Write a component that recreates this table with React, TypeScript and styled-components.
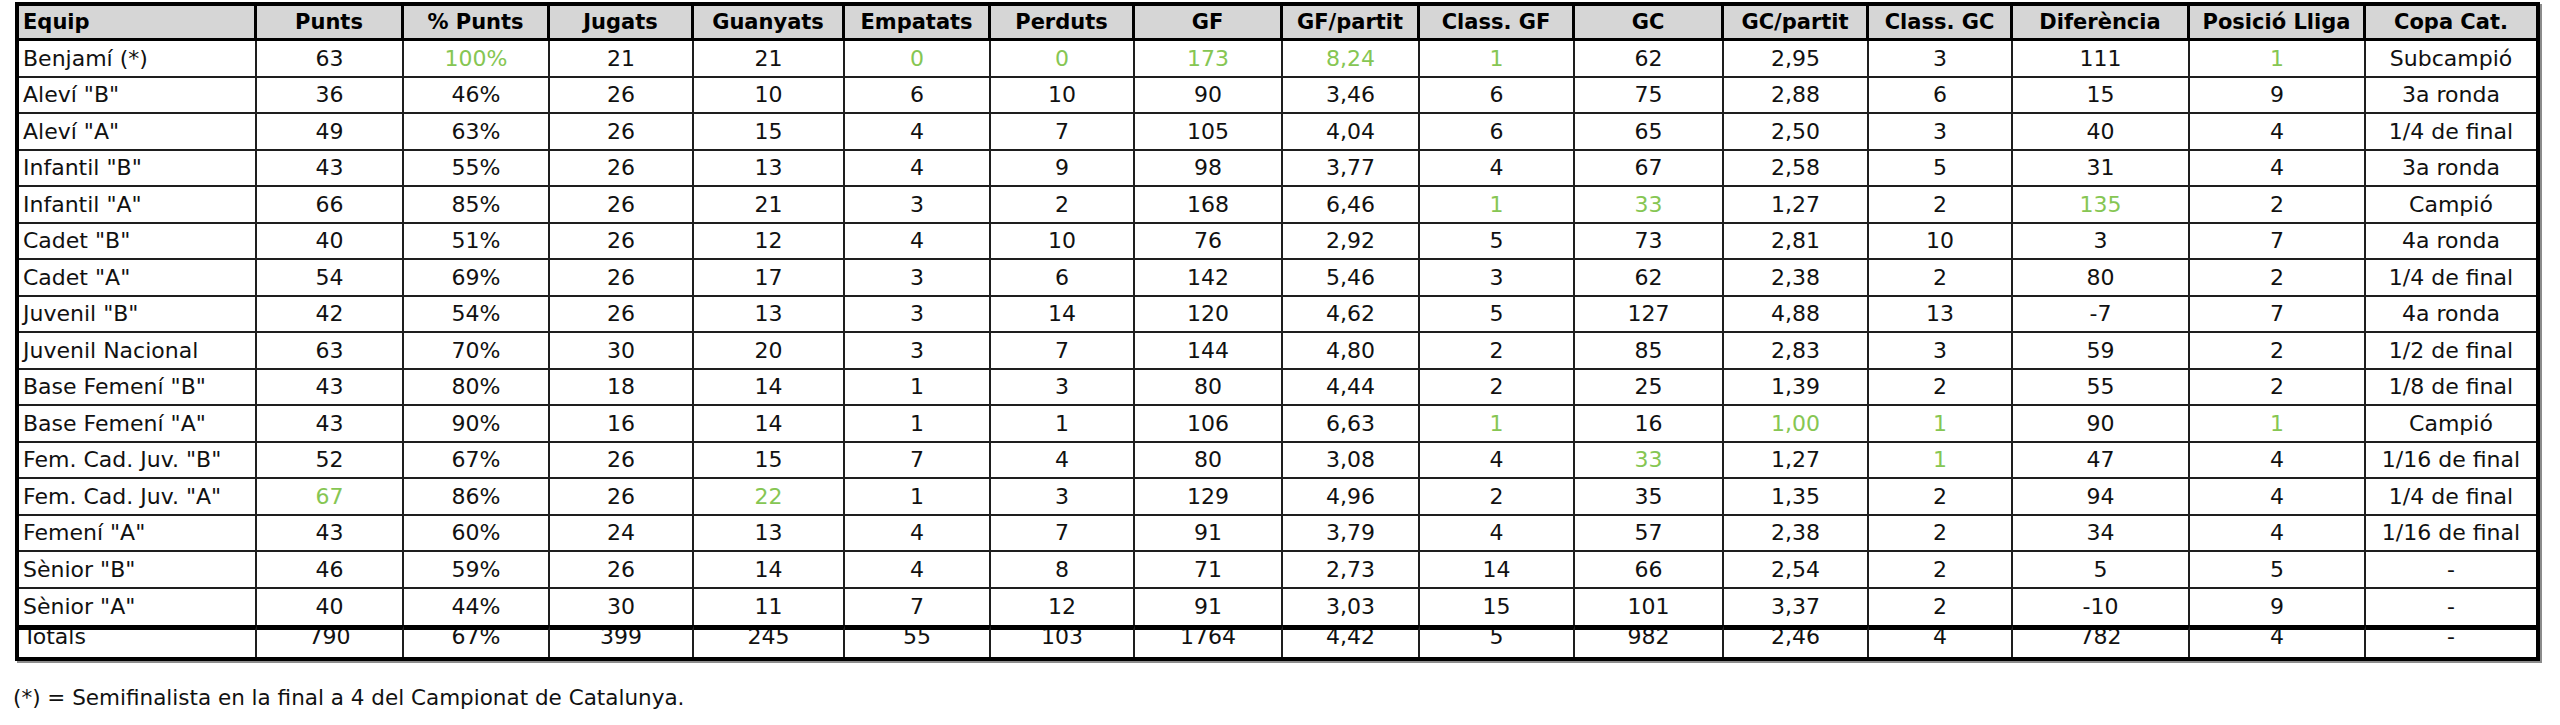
import styled, { createGlobalStyle } from "styled-components";

const GlobalStyle = createGlobalStyle`
  body {
    margin: 0;
    background: #fff;
    font-family: "DejaVu Sans", "Liberation Sans", sans-serif;
    color: #000;
  }
`;

const Page = styled.div`
  padding: 2px 0 0 15px;
`;

const StatsTable = styled.table`
  border: 4px solid #000;
  border-spacing: 0;
  table-layout: fixed;
  width: 2525px;
  box-shadow: 2px 2px 0 #8c8c8c;
  font-size: 22px;
`;

const HeadRow = styled.tr`
  height: 35px;
`;

const HeadCell = styled.th<{ $left?: boolean; $last?: boolean }>`
  background: #d6d6d6;
  font-size: 21px;
  font-weight: bold;
  padding: 0 4px;
  text-align: ${(p) => (p.$left ? "left" : "center")};
  border-right: ${(p) => (p.$last ? "none" : "3px solid #000")};
  border-bottom: 3px solid #000;
  white-space: nowrap;
  overflow: hidden;
`;

const DataRow = styled.tr`
  height: 36.5px;
`;

const Cell = styled.td<{ $left?: boolean; $last?: boolean; $green?: boolean; $noBottom?: boolean }>`
  padding: 0 4px;
  text-align: ${(p) => (p.$left ? "left" : "center")};
  color: ${(p) => (p.$green ? "#86c653" : "#111")};
  border-right: ${(p) => (p.$last ? "none" : "2px solid #1e1e1e")};
  border-bottom: ${(p) => (p.$noBottom ? "none" : "2px solid #1e1e1e")};
  white-space: nowrap;
  overflow: hidden;
`;

const TotalRow = styled.tr`
  height: 32px;
`;

const TotalCell = styled.td<{ $left?: boolean; $last?: boolean }>`
  padding: 0 4px;
  vertical-align: top;
  text-align: ${(p) => (p.$left ? "left" : "center")};
  color: #111;
  border-top: 5px solid #000;
  border-right: ${(p) => (p.$last ? "none" : "2px solid #1e1e1e")};
  white-space: nowrap;
  overflow: hidden;
`;

// la fila de totals queda retallada per la vora gruixuda, com a l'original
const TotalClip = styled.div`
  height: 27px;
  overflow: hidden;
`;

const TotalText = styled.div`
  line-height: 26px;
  margin-top: -6px;
`;

const Footnote = styled.p`
  margin: 25px 0 0 -2px;
  font-size: 21.5px;
  line-height: 24px;
  color: #111;
`;

const columns: { label: string; width: number }[] = [
  { label: "Equip", width: 238 },
  { label: "Punts", width: 147 },
  { label: "% Punts", width: 146 },
  { label: "Jugats", width: 144 },
  { label: "Guanyats", width: 151 },
  { label: "Empatats", width: 146 },
  { label: "Perduts", width: 144 },
  { label: "GF", width: 148 },
  { label: "GF/partit", width: 137 },
  { label: "Class. GF", width: 155 },
  { label: "GC", width: 149 },
  { label: "GC/partit", width: 145 },
  { label: "Class. GC", width: 144 },
  { label: "Diferència", width: 177 },
  { label: "Posició Lliga", width: 176 },
  { label: "Copa Cat.", width: 170 },
];

// green = indexs de columna destacats
type Team = { cells: string[]; green?: number[] };

const teams: Team[] = [
  { cells: ["Benjamí (*)", "63", "100%", "21", "21", "0", "0", "173", "8,24", "1", "62", "2,95", "3", "111", "1", "Subcampió"], green: [2, 5, 6, 7, 8, 9, 14] },
  { cells: ['Aleví "B"', "36", "46%", "26", "10", "6", "10", "90", "3,46", "6", "75", "2,88", "6", "15", "9", "3a ronda"] },
  { cells: ['Aleví "A"', "49", "63%", "26", "15", "4", "7", "105", "4,04", "6", "65", "2,50", "3", "40", "4", "1/4 de final"] },
  { cells: ['Infantil "B"', "43", "55%", "26", "13", "4", "9", "98", "3,77", "4", "67", "2,58", "5", "31", "4", "3a ronda"] },
  { cells: ['Infantil "A"', "66", "85%", "26", "21", "3", "2", "168", "6,46", "1", "33", "1,27", "2", "135", "2", "Campió"], green: [9, 10, 13] },
  { cells: ['Cadet "B"', "40", "51%", "26", "12", "4", "10", "76", "2,92", "5", "73", "2,81", "10", "3", "7", "4a ronda"] },
  { cells: ['Cadet "A"', "54", "69%", "26", "17", "3", "6", "142", "5,46", "3", "62", "2,38", "2", "80", "2", "1/4 de final"] },
  { cells: ['Juvenil "B"', "42", "54%", "26", "13", "3", "14", "120", "4,62", "5", "127", "4,88", "13", "-7", "7", "4a ronda"] },
  { cells: ["Juvenil Nacional", "63", "70%", "30", "20", "3", "7", "144", "4,80", "2", "85", "2,83", "3", "59", "2", "1/2 de final"] },
  { cells: ['Base Femení "B"', "43", "80%", "18", "14", "1", "3", "80", "4,44", "2", "25", "1,39", "2", "55", "2", "1/8 de final"] },
  { cells: ['Base Femení "A"', "43", "90%", "16", "14", "1", "1", "106", "6,63", "1", "16", "1,00", "1", "90", "1", "Campió"], green: [9, 11, 12, 14] },
  { cells: ['Fem. Cad. Juv. "B"', "52", "67%", "26", "15", "7", "4", "80", "3,08", "4", "33", "1,27", "1", "47", "4", "1/16 de final"], green: [10, 12] },
  { cells: ['Fem. Cad. Juv. "A"', "67", "86%", "26", "22", "1", "3", "129", "4,96", "2", "35", "1,35", "2", "94", "4", "1/4 de final"], green: [1, 4] },
  { cells: ['Femení "A"', "43", "60%", "24", "13", "4", "7", "91", "3,79", "4", "57", "2,38", "2", "34", "4", "1/16 de final"] },
  { cells: ['Sènior "B"', "46", "59%", "26", "14", "4", "8", "71", "2,73", "14", "66", "2,54", "2", "5", "5", "-"] },
  { cells: ['Sènior "A"', "40", "44%", "30", "11", "7", "12", "91", "3,03", "15", "101", "3,37", "2", "-10", "9", "-"] },
];

const totals = ["Totals", "790", "67%", "399", "245", "55", "103", "1764", "4,42", "5", "982", "2,46", "4", "782", "4", "-"];

export default function App() {
  const lastCol = columns.length - 1;
  return (
    <Page>
      <GlobalStyle />
      <StatsTable>
        <colgroup>
          {columns.map((c) => (
            <col key={c.label} style={{ width: c.width }} />
          ))}
        </colgroup>
        <thead>
          <HeadRow>
            {columns.map((c, i) => (
              <HeadCell key={c.label} $left={i === 0} $last={i === lastCol}>
                {c.label}
              </HeadCell>
            ))}
          </HeadRow>
        </thead>
        <tbody>
          {teams.map((t, r) => (
            <DataRow key={t.cells[0]}>
              {t.cells.map((v, i) => (
                <Cell
                  key={i}
                  $left={i === 0}
                  $last={i === lastCol}
                  $green={t.green?.includes(i)}
                  $noBottom={r === teams.length - 1}
                >
                  {v}
                </Cell>
              ))}
            </DataRow>
          ))}
          <TotalRow>
            {totals.map((v, i) => (
              <TotalCell key={i} $left={i === 0} $last={i === lastCol}>
                <TotalClip>
                  <TotalText>{v}</TotalText>
                </TotalClip>
              </TotalCell>
            ))}
          </TotalRow>
        </tbody>
      </StatsTable>
      <Footnote>(*) = Semifinalista en la final a 4 del Campionat de Catalunya.</Footnote>
    </Page>
  );
}
